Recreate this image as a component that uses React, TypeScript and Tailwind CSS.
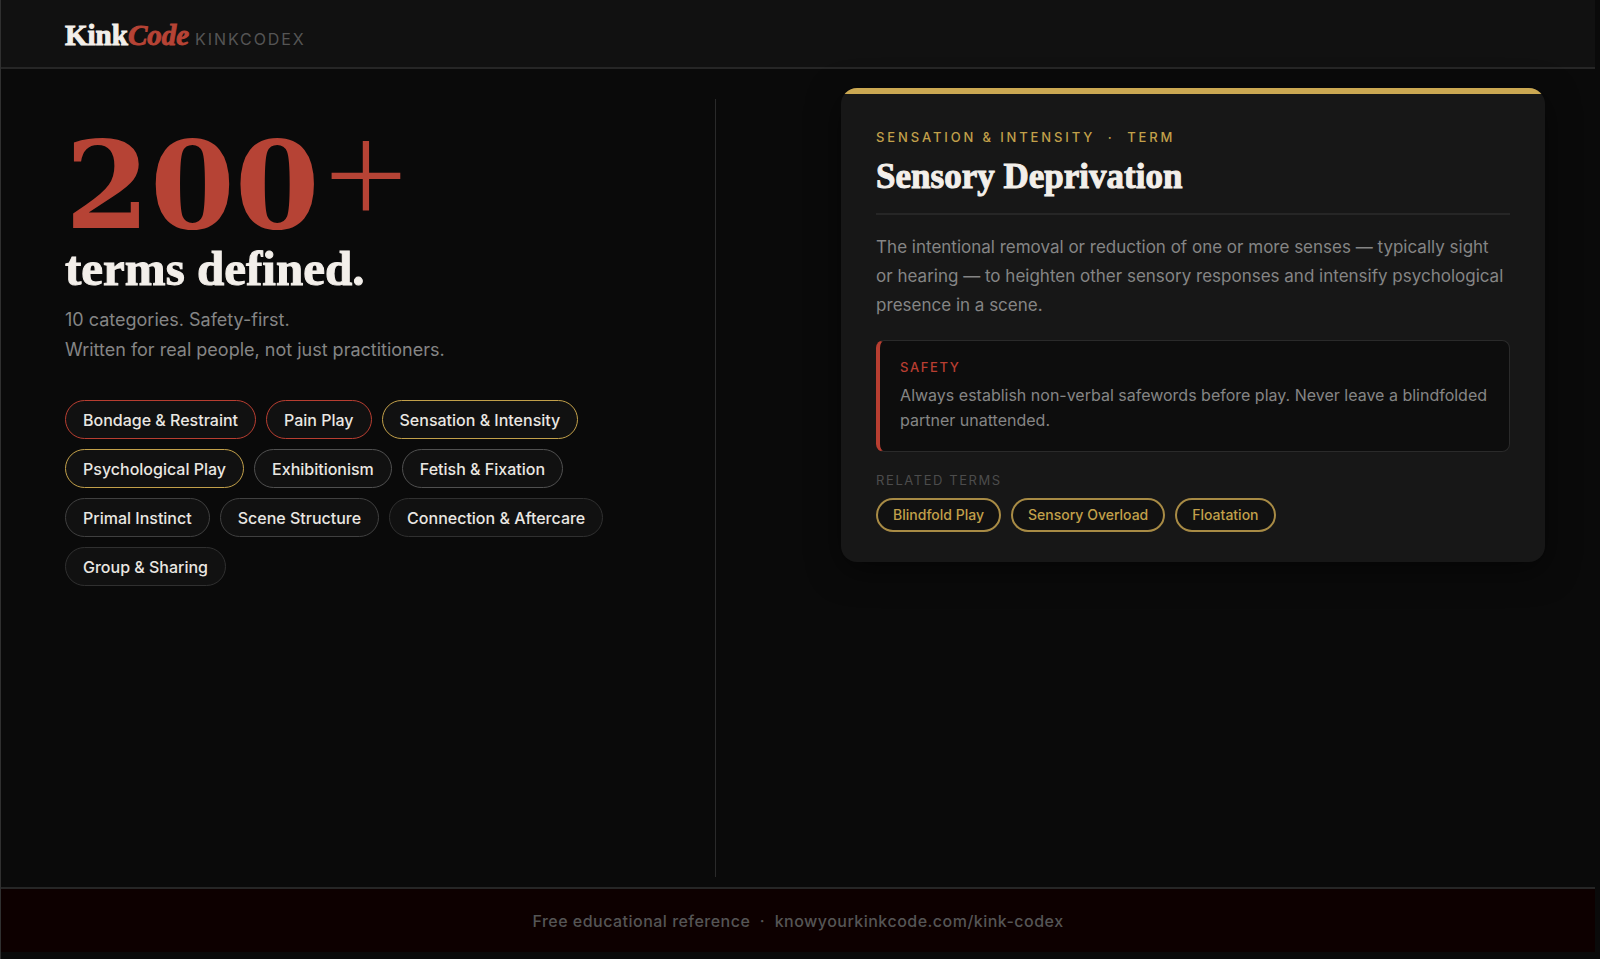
import clsx from "clsx";

type Tone = "red" | "gold" | "light" | "mid" | "dim";

const toneClass: Record<Tone, string> = {
  red: "border-[#b83e31]",
  gold: "border-[#c2a04a]",
  light: "border-[#505050]",
  mid: "border-[#404040]",
  dim: "border-[#303030]",
};

const categories: { name: string; tone: Tone }[] = [
  { name: "Bondage & Restraint", tone: "red" },
  { name: "Pain Play", tone: "red" },
  { name: "Sensation & Intensity", tone: "gold" },
  { name: "Psychological Play", tone: "gold" },
  { name: "Exhibitionism", tone: "light" },
  { name: "Fetish & Fixation", tone: "light" },
  { name: "Primal Instinct", tone: "mid" },
  { name: "Scene Structure", tone: "mid" },
  { name: "Connection & Aftercare", tone: "dim" },
  { name: "Group & Sharing", tone: "dim" },
];

const relatedTerms = ["Blindfold Play", "Sensory Overload", "Floatation"];

function Header() {
  return (
    <header className="flex h-[69px] items-center border-b-2 border-[#262626] bg-[#111111] px-16 pt-[3px]">
      <div className="flex items-baseline gap-[6px]">
        <span className="font-['Liberation_Serif',serif] text-[29px] leading-8 font-bold text-[#f3efea] [-webkit-text-stroke:1px]">
          Kink<em className="text-[#b64335]">Code</em>
        </span>
        <span className="text-base tracking-[0.12em] text-[#555555]">KINKCODEX</span>
      </div>
    </header>
  );
}

function Intro() {
  return (
    <section className="w-[44.8%] px-16 pt-16">
      <h1 className="font-bold">
        <span className="flex h-[104px] items-center gap-1 text-[#b64335]">
          <span className="font-['DejaVu_Serif',serif] text-[122px] leading-none">200</span>
          <span className="pb-7 font-['Open_Sans',sans-serif] text-[148px] leading-none font-light">+</span>
        </span>
        <span className="block font-['Liberation_Serif',serif] text-[49px] leading-[64px] text-[#f3efea] [-webkit-text-stroke:1px]">
          terms defined.
        </span>
      </h1>
      <p className="mt-1 text-lg leading-[30px] text-[#858585]">
        10 categories. Safety-first.
        <br />
        Written for real people, not just practitioners.
      </p>
      <ul className="mt-[35px] flex max-w-[560px] flex-wrap gap-[10px]">
        {categories.map(({ name, tone }) => (
          <li
            key={name}
            className={clsx(
              "flex h-[39px] items-center rounded-full border bg-[#111111] px-[17px] text-base font-medium text-[#eae7e2]",
              toneClass[tone],
            )}
          >
            {name}
          </li>
        ))}
      </ul>
    </section>
  );
}

function TermCard() {
  return (
    <article className="overflow-hidden rounded-2xl bg-[#171717] shadow-[0_8px_32px_rgba(0,0,0,0.5)]">
      <div className="h-[6px] bg-[#cba852]" />
      <div className="px-[35px] pt-[33px] pb-[30px]">
        <p className="text-[13px] leading-5 font-medium tracking-[0.22em] whitespace-pre text-[#c2a04a]">
          {"SENSATION & INTENSITY  ·  TERM"}
        </p>
        <h2 className="mt-2 border-b-2 border-[#262626] pb-[14px] font-['Liberation_Serif',serif] text-[35px] leading-[44px] font-bold text-[#f3efea] [-webkit-text-stroke:1px]">
          Sensory Deprivation
        </h2>
        <p className="mt-[18px] pr-1 text-[17px] leading-[29px] text-[#858585]">
          The intentional removal or reduction of one or more senses — typically sight or hearing — to heighten other
          sensory responses and intensify psychological presence in a scene.
        </p>
        <div className="mt-5 rounded-lg border border-[#2a2a2a] border-l-4 border-l-[#b83e31] bg-[#0d0d0d] pt-4 pr-4 pb-[18px] pl-5">
          <h3 className="text-[13px] leading-5 font-medium tracking-[0.12em] text-[#b83e31]">SAFETY</h3>
          <p className="mt-[6px] text-base leading-[25px] text-[#858585]">
            Always establish non-verbal safewords before play. Never leave a blindfolded partner unattended.
          </p>
        </div>
        <h3 className="mt-[18px] text-[13px] leading-5 tracking-[0.12em] text-[#4c4c4c]">RELATED TERMS</h3>
        <div className="mt-2 flex flex-wrap gap-[10px]">
          {relatedTerms.map((term) => (
            <span
              key={term}
              className="flex h-[34px] items-center rounded-full border-2 border-[#a88b45] bg-[#111111] px-[15px] text-sm font-medium text-[#c2a04a]"
            >
              {term}
            </span>
          ))}
        </div>
      </div>
    </article>
  );
}

export default function App() {
  return (
    <div className="flex min-h-screen flex-col border-l border-[#303030] bg-[#0a0a0a] pr-[5px] pb-[7px] font-['Inter',sans-serif]">
      <Header />
      <main className="flex grow">
        <Intro />
        <div className="mt-[30px] mb-[10px] w-px bg-[#2a2a2a]" />
        <section className="grow basis-0 pt-[19px] pr-[50px] pl-[125px]">
          <TermCard />
        </section>
      </main>
      <footer className="flex h-[65px] items-center justify-center border-t-2 border-[#262626] bg-[#0d0000] text-base font-medium tracking-[0.03em] whitespace-pre text-[#555555]">
        {"Free educational reference  ·  "}
        <a href="https://knowyourkinkcode.com/kink-codex">knowyourkinkcode.com/kink-codex</a>
      </footer>
    </div>
  );
}
